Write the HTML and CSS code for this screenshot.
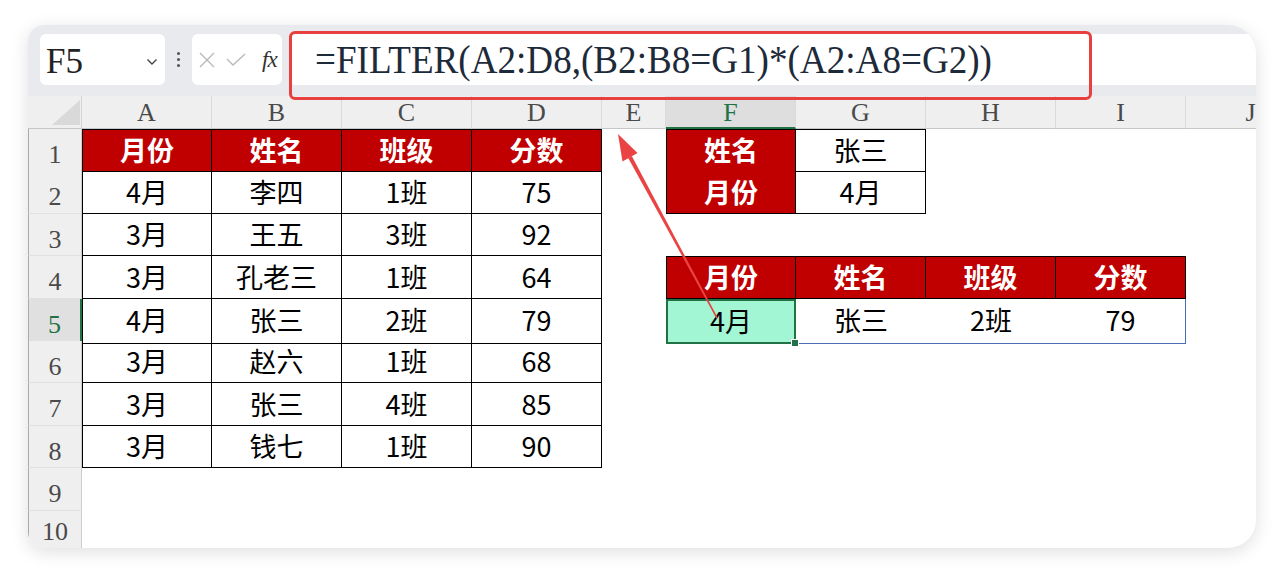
FILE: index.html
```html
<!DOCTYPE html>
<html lang="zh-CN">
<head>
<meta charset="utf-8">
<title>FILTER</title>
<link rel="stylesheet" href="styles.css">
</head>
<body>
<div class="page">
  <div class="card">
    <div class="toolbar">
      <div class="namebox">
        <span class="ref">F5</span>
        <svg class="chev" width="12" height="8" viewBox="0 0 12 8"><path d="M1.5 1.5 L6 6 L10.5 1.5" fill="none" stroke="#444" stroke-width="1.4"/></svg>
      </div>
      <div class="sep"><i></i><i></i><i></i></div>
      <div class="fxbox">
        <svg width="18" height="18" viewBox="0 0 18 18"><path d="M2 2 L16 16 M16 2 L2 16" stroke="#b9b9b9" stroke-width="1.4" fill="none"/></svg>
        <svg class="ok" width="22" height="16" viewBox="0 0 22 16"><path d="M2 7 L8 13 L20 2" stroke="#b9b9b9" stroke-width="1.4" fill="none"/></svg>
        <span class="fx">fx</span>
      </div>
      <div class="formula"><span class="ftext">=FILTER(A2:D8,(B2:B8=G1)*(A2:A8=G2))</span></div>
    </div>
    <div class="hilite"></div>

    <div class="sheet">
      <div class="colhead">
        <div class="corner"><svg width="54" height="33" viewBox="0 0 54 33"><path d="M24 29 L52 4 L52 29 Z" fill="#d9d9d9"/></svg></div>
        <div class="ch">A</div><div class="ch">B</div><div class="ch">C</div><div class="ch">D</div>
        <div class="ch">E</div><div class="ch on">F</div><div class="ch">G</div><div class="ch">H</div>
        <div class="ch">I</div><div class="ch">J</div>
      </div>

      <div class="row">
        <div class="rh">1</div>
        <div class="c h t tl tt">月份</div><div class="c h t tt">姓名</div><div class="c h t tt">班级</div><div class="c h t tt">分数</div>
        <div class="c"></div>
        <div class="c h t tl tt">姓名</div><div class="c t tt">张三</div>
        <div class="c"></div><div class="c"></div><div class="c"></div>
      </div>
      <div class="row">
        <div class="rh">2</div>
        <div class="c t tl">4月</div><div class="c t">李四</div><div class="c t">1班</div><div class="c t">75</div>
        <div class="c"></div>
        <div class="c h t tl">月份</div><div class="c t">4月</div>
        <div class="c"></div><div class="c"></div><div class="c"></div>
      </div>
      <div class="row">
        <div class="rh">3</div>
        <div class="c t tl">3月</div><div class="c t">王五</div><div class="c t">3班</div><div class="c t">92</div>
        <div class="c"></div><div class="c"></div><div class="c"></div>
        <div class="c"></div><div class="c"></div><div class="c"></div>
      </div>
      <div class="row">
        <div class="rh">4</div>
        <div class="c t tl">3月</div><div class="c t">孔老三</div><div class="c t">1班</div><div class="c t">64</div>
        <div class="c"></div>
        <div class="c h t tl tt">月份</div><div class="c h t tt">姓名</div><div class="c h t tt">班级</div><div class="c h t tt">分数</div>
        <div class="c"></div>
      </div>
      <div class="row">
        <div class="rh on">5</div>
        <div class="c t tl">4月</div><div class="c t">张三</div><div class="c t">2班</div><div class="c t">79</div>
        <div class="c"></div>
        <div class="c sel">4月</div><div class="c sp">张三</div><div class="c sp">2班</div><div class="c sp spr">79</div>
        <div class="c"></div>
      </div>
      <div class="row">
        <div class="rh">6</div>
        <div class="c t tl">3月</div><div class="c t">赵六</div><div class="c t">1班</div><div class="c t">68</div>
        <div class="c"></div><div class="c"></div><div class="c"></div>
        <div class="c"></div><div class="c"></div><div class="c"></div>
      </div>
      <div class="row">
        <div class="rh">7</div>
        <div class="c t tl">3月</div><div class="c t">张三</div><div class="c t">4班</div><div class="c t">85</div>
        <div class="c"></div><div class="c"></div><div class="c"></div>
        <div class="c"></div><div class="c"></div><div class="c"></div>
      </div>
      <div class="row">
        <div class="rh">8</div>
        <div class="c t tl">3月</div><div class="c t">钱七</div><div class="c t">1班</div><div class="c t">90</div>
        <div class="c"></div><div class="c"></div><div class="c"></div>
        <div class="c"></div><div class="c"></div><div class="c"></div>
      </div>
      <div class="row">
        <div class="rh">9</div>
        <div class="c"></div><div class="c"></div><div class="c"></div><div class="c"></div>
        <div class="c"></div><div class="c"></div><div class="c"></div>
        <div class="c"></div><div class="c"></div><div class="c"></div>
      </div>
      <div class="row last">
        <div class="rh">10</div>
        <div class="c"></div><div class="c"></div><div class="c"></div><div class="c"></div>
        <div class="c"></div><div class="c"></div><div class="c"></div>
        <div class="c"></div><div class="c"></div><div class="c"></div>
      </div>
    </div>
  </div>
</div>
<svg class="arrow" width="1280" height="573" viewBox="0 0 1280 573">
  <polygon points="717.6,317.6 716.4,318.4 628.2,158 631.8,156" fill="#e94343"/>
  <polygon points="618,134 637.5,153 622.5,161.5" fill="#e94343"/>
</svg>
</body>
</html>
```

FILE: styles.css
```css
html, body {
  margin: 0;
  padding: 0;
}
body {
  width: 1280px;
  height: 573px;
  overflow: hidden;
  position: relative;
  background: #ffffff;
  font-family: "Noto Sans CJK SC", "Noto Sans", sans-serif;
}
.page {
  padding: 25px 0 0 28px;
}
.card {
  position: relative;
  width: 1228px;
  height: 523px;
  border-radius: 16px 28px 28px 16px;
  overflow: hidden;
  background: #ffffff;
  box-shadow: 0 4px 18px rgba(0, 0, 0, 0.13);
}

/* ---------- toolbar ---------- */
.toolbar {
  display: flex;
  align-items: center;
  height: 71px;
  box-sizing: border-box;
  padding: 9px 0 11px 12px;
  background: #e8eaed;
}
.namebox {
  width: 125px;
  height: 51px;
  box-sizing: border-box;
  background: #ffffff;
  border-radius: 6px;
  display: flex;
  align-items: center;
  justify-content: space-between;
  padding: 0 7px 0 6px;
}
.ref {
  font-family: "Liberation Serif", serif;
  font-size: 35px;
  color: #222;
  padding-top: 4px;
  line-height: 46px;
}
.chev {
  margin-top: 4px;
}
.sep {
  width: 27px;
  display: flex;
  flex-direction: column;
  align-items: center;
  gap: 3px;
}
.sep i {
  display: block;
  width: 3px;
  height: 3px;
  border-radius: 50%;
  background: #555;
}
.fxbox {
  width: 90px;
  height: 51px;
  box-sizing: border-box;
  background: #ffffff;
  border-radius: 6px;
  display: flex;
  align-items: center;
  padding-left: 6px;
  gap: 9px;
}
.fx {
  font-family: "Liberation Serif", serif;
  font-style: italic;
  font-size: 23px;
  color: #333;
  margin-left: 6px;
  letter-spacing: -1px;
}
.formula {
  flex: 1;
  height: 51px;
  box-sizing: border-box;
  margin-left: 7px;
  background: #ffffff;
  border-radius: 6px 0 0 6px;
  padding: 3px 0 0 26px;
  font-family: "Liberation Serif", serif;
  font-size: 40px;
  line-height: 46px;
  color: #1d2a39;
  white-space: nowrap;
}
.ftext {
  display: inline-block;
  transform: scaleX(0.928);
  transform-origin: 0 50%;
}
.hilite {
  position: absolute;
  left: 261px;
  top: 6px;
  width: 803px;
  height: 69px;
  box-sizing: border-box;
  border: 3px solid #e8403f;
  border-radius: 6px;
}

/* ---------- sheet ---------- */
.colhead,
.row {
  display: grid;
  grid-template-columns: 54px repeat(4, 130px) 64px repeat(5, 130px);
}
.colhead {
  height: 33px;
  background: #efefef;
}
.corner {
  box-sizing: border-box;
  border-bottom: 1px solid #c6c6c6;
  border-right: 1px solid #d4d4d4;
  height: 33px;
}
.corner svg {
  display: block;
}
.ch {
  box-sizing: border-box;
  height: 33px;
  border-right: 1px solid #dadada;
  border-bottom: 1px solid #c6c6c6;
  text-align: center;
  font-family: "Liberation Serif", serif;
  font-size: 26px;
  line-height: 33px;
  color: #4a4a4a;
}
.ch.on {
  background: #dedede;
  color: #217346;
  border-bottom: 2px solid #217346;
}
.row {
  height: 42.4px;
}
.row.last {
  height: 37.4px;
}
.rh {
  box-sizing: border-box;
  background: #efefef;
  border-left: 1px solid #ababab;
  border-right: 1px solid #cdcdcd;
  border-bottom: 1px solid #e0e0e0;
  text-align: center;
  font-family: "Liberation Serif", serif;
  font-size: 26px;
  padding-top: 17px;
  line-height: 18px;
  color: #4a4a4a;
}
.row.last .rh {
  border-bottom: none;
  padding-top: 12px;
}
.rh.on {
  background: #e0e0e0;
  color: #217346;
  border-right: 2px solid #217346;
}
.c {
  box-sizing: border-box;
  display: flex;
  align-items: center;
  justify-content: center;
  font-size: 27px;
  color: #000;
  padding-bottom: 2px;
  white-space: nowrap;
}
.h {
  background: #c00000;
  color: #ffffff;
  font-weight: 700;
}
.t {
  border-right: 1px solid #000;
  border-bottom: 1px solid #000;
}
.tl {
  border-left: 1px solid #000;
}
.tt {
  border-top: 1px solid #000;
}
.sel {
  position: relative;
  background: #a2f6d3;
  border: 2px solid #217346;
}
.sel::after {
  content: "";
  position: absolute;
  right: -5px;
  bottom: -5px;
  width: 6px;
  height: 6px;
  background: #217346;
  border: 1px solid #ffffff;
}
.sp {
  border-bottom: 1px solid #4a6db5;
}
.spr {
  border-right: 1px solid #4a6db5;
}

/* ---------- annotation arrow ---------- */
.arrow {
  position: absolute;
  left: 0;
  top: 0;
  pointer-events: none;
}
```
